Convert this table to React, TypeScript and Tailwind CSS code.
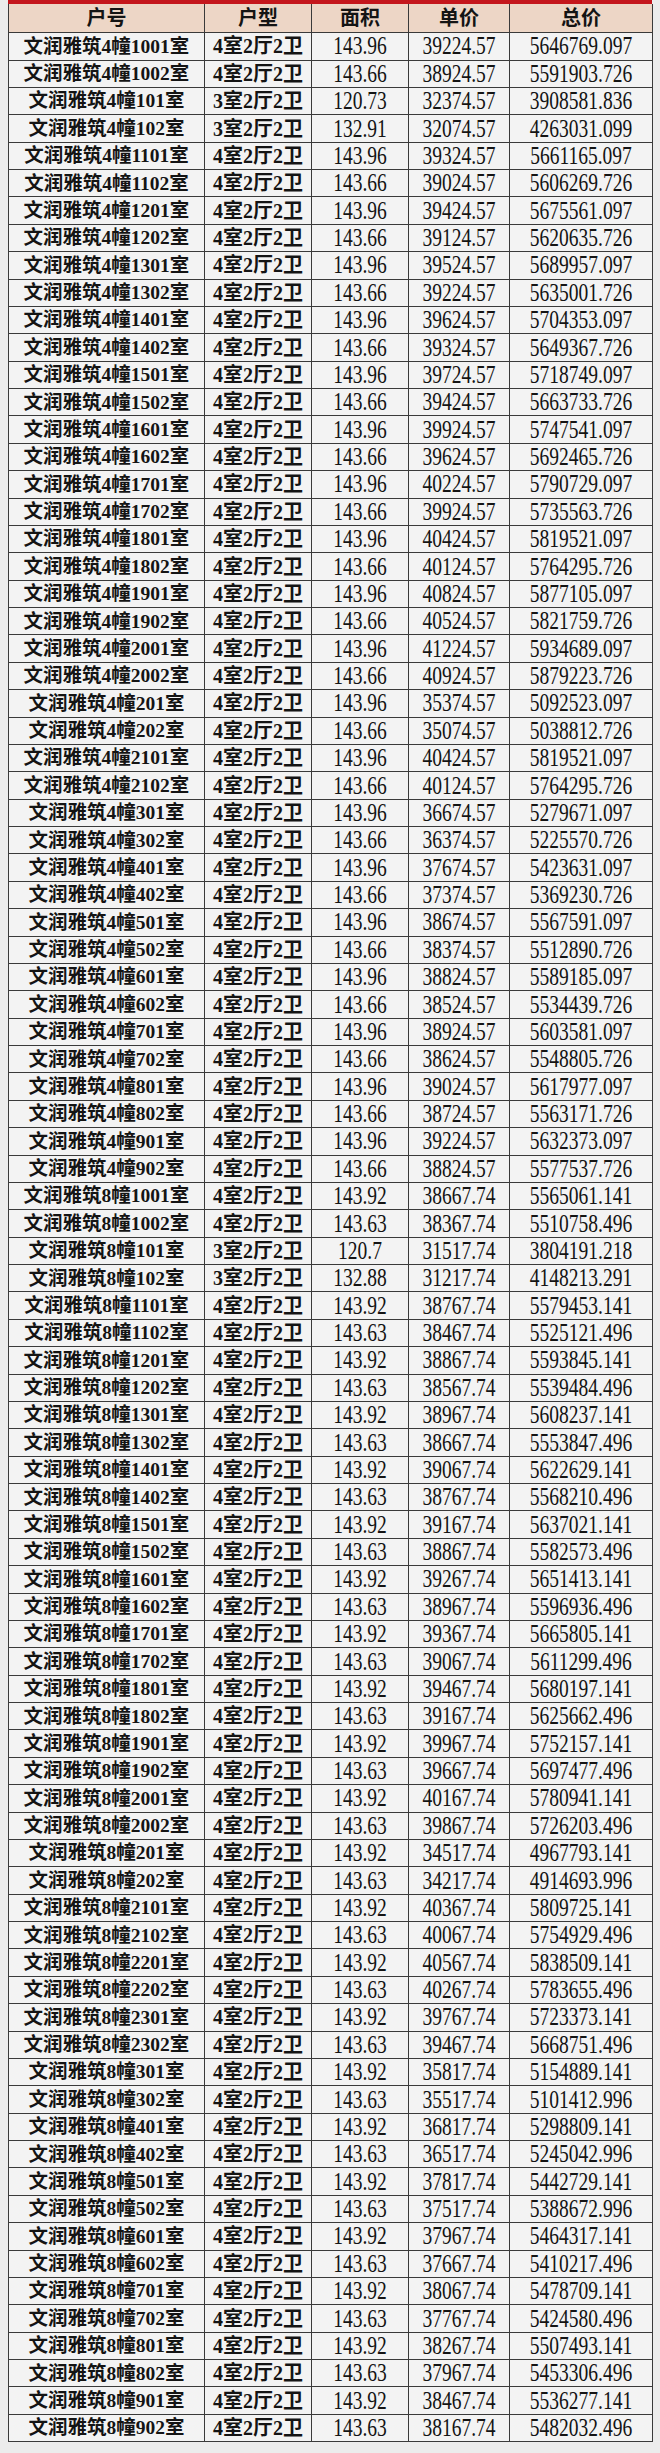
import React from "react";

// 户号, 户型(室数), 面积, 单价, 总价
const raw = `
4幢1001室|4|143.96|39224.57|5646769.097
4幢1002室|4|143.66|38924.57|5591903.726
4幢101室|3|120.73|32374.57|3908581.836
4幢102室|3|132.91|32074.57|4263031.099
4幢1101室|4|143.96|39324.57|5661165.097
4幢1102室|4|143.66|39024.57|5606269.726
4幢1201室|4|143.96|39424.57|5675561.097
4幢1202室|4|143.66|39124.57|5620635.726
4幢1301室|4|143.96|39524.57|5689957.097
4幢1302室|4|143.66|39224.57|5635001.726
4幢1401室|4|143.96|39624.57|5704353.097
4幢1402室|4|143.66|39324.57|5649367.726
4幢1501室|4|143.96|39724.57|5718749.097
4幢1502室|4|143.66|39424.57|5663733.726
4幢1601室|4|143.96|39924.57|5747541.097
4幢1602室|4|143.66|39624.57|5692465.726
4幢1701室|4|143.96|40224.57|5790729.097
4幢1702室|4|143.66|39924.57|5735563.726
4幢1801室|4|143.96|40424.57|5819521.097
4幢1802室|4|143.66|40124.57|5764295.726
4幢1901室|4|143.96|40824.57|5877105.097
4幢1902室|4|143.66|40524.57|5821759.726
4幢2001室|4|143.96|41224.57|5934689.097
4幢2002室|4|143.66|40924.57|5879223.726
4幢201室|4|143.96|35374.57|5092523.097
4幢202室|4|143.66|35074.57|5038812.726
4幢2101室|4|143.96|40424.57|5819521.097
4幢2102室|4|143.66|40124.57|5764295.726
4幢301室|4|143.96|36674.57|5279671.097
4幢302室|4|143.66|36374.57|5225570.726
4幢401室|4|143.96|37674.57|5423631.097
4幢402室|4|143.66|37374.57|5369230.726
4幢501室|4|143.96|38674.57|5567591.097
4幢502室|4|143.66|38374.57|5512890.726
4幢601室|4|143.96|38824.57|5589185.097
4幢602室|4|143.66|38524.57|5534439.726
4幢701室|4|143.96|38924.57|5603581.097
4幢702室|4|143.66|38624.57|5548805.726
4幢801室|4|143.96|39024.57|5617977.097
4幢802室|4|143.66|38724.57|5563171.726
4幢901室|4|143.96|39224.57|5632373.097
4幢902室|4|143.66|38824.57|5577537.726
8幢1001室|4|143.92|38667.74|5565061.141
8幢1002室|4|143.63|38367.74|5510758.496
8幢101室|3|120.7|31517.74|3804191.218
8幢102室|3|132.88|31217.74|4148213.291
8幢1101室|4|143.92|38767.74|5579453.141
8幢1102室|4|143.63|38467.74|5525121.496
8幢1201室|4|143.92|38867.74|5593845.141
8幢1202室|4|143.63|38567.74|5539484.496
8幢1301室|4|143.92|38967.74|5608237.141
8幢1302室|4|143.63|38667.74|5553847.496
8幢1401室|4|143.92|39067.74|5622629.141
8幢1402室|4|143.63|38767.74|5568210.496
8幢1501室|4|143.92|39167.74|5637021.141
8幢1502室|4|143.63|38867.74|5582573.496
8幢1601室|4|143.92|39267.74|5651413.141
8幢1602室|4|143.63|38967.74|5596936.496
8幢1701室|4|143.92|39367.74|5665805.141
8幢1702室|4|143.63|39067.74|5611299.496
8幢1801室|4|143.92|39467.74|5680197.141
8幢1802室|4|143.63|39167.74|5625662.496
8幢1901室|4|143.92|39967.74|5752157.141
8幢1902室|4|143.63|39667.74|5697477.496
8幢2001室|4|143.92|40167.74|5780941.141
8幢2002室|4|143.63|39867.74|5726203.496
8幢201室|4|143.92|34517.74|4967793.141
8幢202室|4|143.63|34217.74|4914693.996
8幢2101室|4|143.92|40367.74|5809725.141
8幢2102室|4|143.63|40067.74|5754929.496
8幢2201室|4|143.92|40567.74|5838509.141
8幢2202室|4|143.63|40267.74|5783655.496
8幢2301室|4|143.92|39767.74|5723373.141
8幢2302室|4|143.63|39467.74|5668751.496
8幢301室|4|143.92|35817.74|5154889.141
8幢302室|4|143.63|35517.74|5101412.996
8幢401室|4|143.92|36817.74|5298809.141
8幢402室|4|143.63|36517.74|5245042.996
8幢501室|4|143.92|37817.74|5442729.141
8幢502室|4|143.63|37517.74|5388672.996
8幢601室|4|143.92|37967.74|5464317.141
8幢602室|4|143.63|37667.74|5410217.496
8幢701室|4|143.92|38067.74|5478709.141
8幢702室|4|143.63|37767.74|5424580.496
8幢801室|4|143.92|38267.74|5507493.141
8幢802室|4|143.63|37967.74|5453306.496
8幢901室|4|143.92|38467.74|5536277.141
8幢902室|4|143.63|38167.74|5482032.496
`;

const rows = raw
  .trim()
  .split("\n")
  .map((line) => {
    const [unit, rooms, area, price, total] = line.split("|");
    return {
      unit: "文润雅筑" + unit,
      layout: rooms + "室2厅2卫",
      area,
      price,
      total,
    };
  });

const headers = ["户号", "户型", "面积", "单价", "总价"];

const cjk = { fontFamily: '"Liberation Serif", "Noto Sans CJK SC", serif' };

function Num({ children }: { children: React.ReactNode }) {
  return (
    <span className="block scale-x-[0.78] text-[25px] leading-[22px] whitespace-nowrap">
      {children}
    </span>
  );
}

export default function App() {
  return (
    <div
      className="w-[660px] h-[2453px] bg-[#ececec] px-[8px] text-[#141414] leading-none"
      style={cjk}
    >
      <div className="h-[4px] bg-[#c4161c]" />
      <table className="w-[644px] table-fixed border-collapse">
        <colgroup>
          <col className="w-[196px]" />
          <col className="w-[107px]" />
          <col className="w-[97px]" />
          <col className="w-[101px]" />
          <col className="w-[143px]" />
        </colgroup>
        <thead>
          <tr className="h-[28.7px] bg-[#edd6c6]">
            {headers.map((h) => (
              <th
                key={h}
                className="border border-t-0 border-[#3a3a3a] p-0 text-center text-[20px] font-bold leading-none"
              >
                {h}
              </th>
            ))}
          </tr>
        </thead>
        <tbody>
          {rows.map((r, i) => (
            <tr key={i} className="h-[27.38px] bg-[#f3f3f3]">
              <td className="border border-[#3a3a3a] p-0 text-center text-[19.5px] font-bold leading-none whitespace-nowrap">
                {r.unit}
              </td>
              <td className="border border-[#3a3a3a] p-0 text-center text-[20px] font-semibold leading-none whitespace-nowrap">
                {r.layout}
              </td>
              <td className="border border-[#3a3a3a] p-0 text-center leading-none">
                <Num>{r.area}</Num>
              </td>
              <td className="border border-[#3a3a3a] p-0 text-center leading-none">
                <Num>{r.price}</Num>
              </td>
              <td className="border border-[#3a3a3a] p-0 text-center leading-none">
                <Num>{r.total}</Num>
              </td>
            </tr>
          ))}
        </tbody>
      </table>
    </div>
  );
}
